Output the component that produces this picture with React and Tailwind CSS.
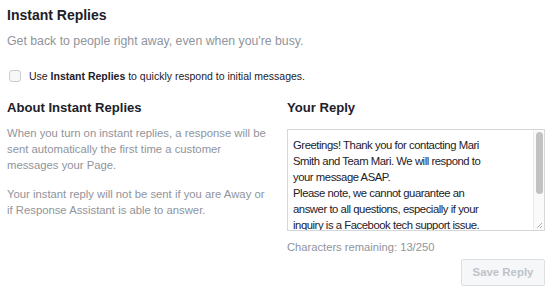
import React from 'react';

const replyLines = [
	'Greetings! Thank you for contacting Mari',
	'Smith and Team Mari. We will respond to',
	'your message ASAP.',
	'Please note, we cannot guarantee an',
	'answer to all questions, especially if your',
	'inquiry is a Facebook tech support issue.',
];

const ReplyBox = () => {
	return (
		<div className="flex h-[102px] w-[258px] border border-[#d3d6db] bg-white">
			<div className="flex-1 overflow-hidden pl-[5px] pt-[7px] text-[11.3px] leading-[16px] tracking-[-0.45px] text-[#1d2129]">
				{replyLines.map((line) => (
					<div key={line} className="whitespace-nowrap">
						{line}
					</div>
				))}
			</div>
			{/* fake scrollbar */}
			<div className="relative w-[11px] border-l border-[#ececec] bg-[#fafafa]">
				<div className="mx-auto mt-[2px] h-[62px] w-[7px] rounded-full bg-[#c2c2c2]" />
				<svg
					className="absolute bottom-[1px] right-[1px]"
					width="8"
					height="8"
					viewBox="0 0 8 8">
					<path d="M7 2 L2 7 M7 5 L5 7" stroke="#9a9a9a" strokeWidth="0.8" />
				</svg>
			</div>
		</div>
	);
};

export default function App() {
	return (
		<div className="h-[306px] w-[555px] overflow-hidden bg-white pl-[7px] pt-[5px] font-['Liberation_Sans',Arial,sans-serif]">
			<h1 className="text-[14px] font-bold leading-[20px] text-[#1d2129]">
				Instant Replies
			</h1>
			<p className="mt-[7px] text-[12.3px] leading-[18px] text-[#90949c]">
				Get back to people right away, even when you're busy.
			</p>

			<label className="mt-[18px] flex items-center gap-[8px] pl-[2px] text-[10.5px] leading-[16px] text-[#1d2129]">
				<span className="h-[12px] w-[12px] rounded-[3px] border border-[#c9ccd1] bg-[#f6f7f9]" />
				<span>
					Use <b>Instant Replies</b> to quickly respond to initial messages.
				</span>
			</label>

			<div className="mt-[15px] grid grid-cols-[280px_1fr]">
				{/* left column */}
				<div className="text-[11.3px] leading-[16px] text-[#90949c]">
					<h2 className="text-[13.1px] font-bold leading-[18px] text-[#1d2129]">
						About Instant Replies
					</h2>
					<p className="mt-[8px]">
						When you turn on instant replies, a response will be
						<br />
						sent automatically the first time a customer
						<br />
						messages your Page.
					</p>
					<p className="mt-[13px]">
						Your instant reply will not be sent if you are Away or
						<br />
						if Response Assistant is able to answer.
					</p>
				</div>

				{/* right column */}
				<div>
					<h2 className="text-[13.1px] font-bold leading-[18px] text-[#1d2129]">
						Your Reply
					</h2>
					<div className="mt-[12px]">
						<ReplyBox />
					</div>
					<p className="mt-[8px] text-[11.2px] leading-[16px] text-[#90949c]">
						Characters remaining: 13/250
					</p>
					<div className="mt-[4px] flex w-[258px] justify-end">
						<button className="h-[27px] w-[84px] rounded-[2px] border border-[#dddfe2] bg-[#f6f7f9] text-[11.4px] font-bold text-[#bec3c9]">
							Save Reply
						</button>
					</div>
				</div>
			</div>
		</div>
	);
}
